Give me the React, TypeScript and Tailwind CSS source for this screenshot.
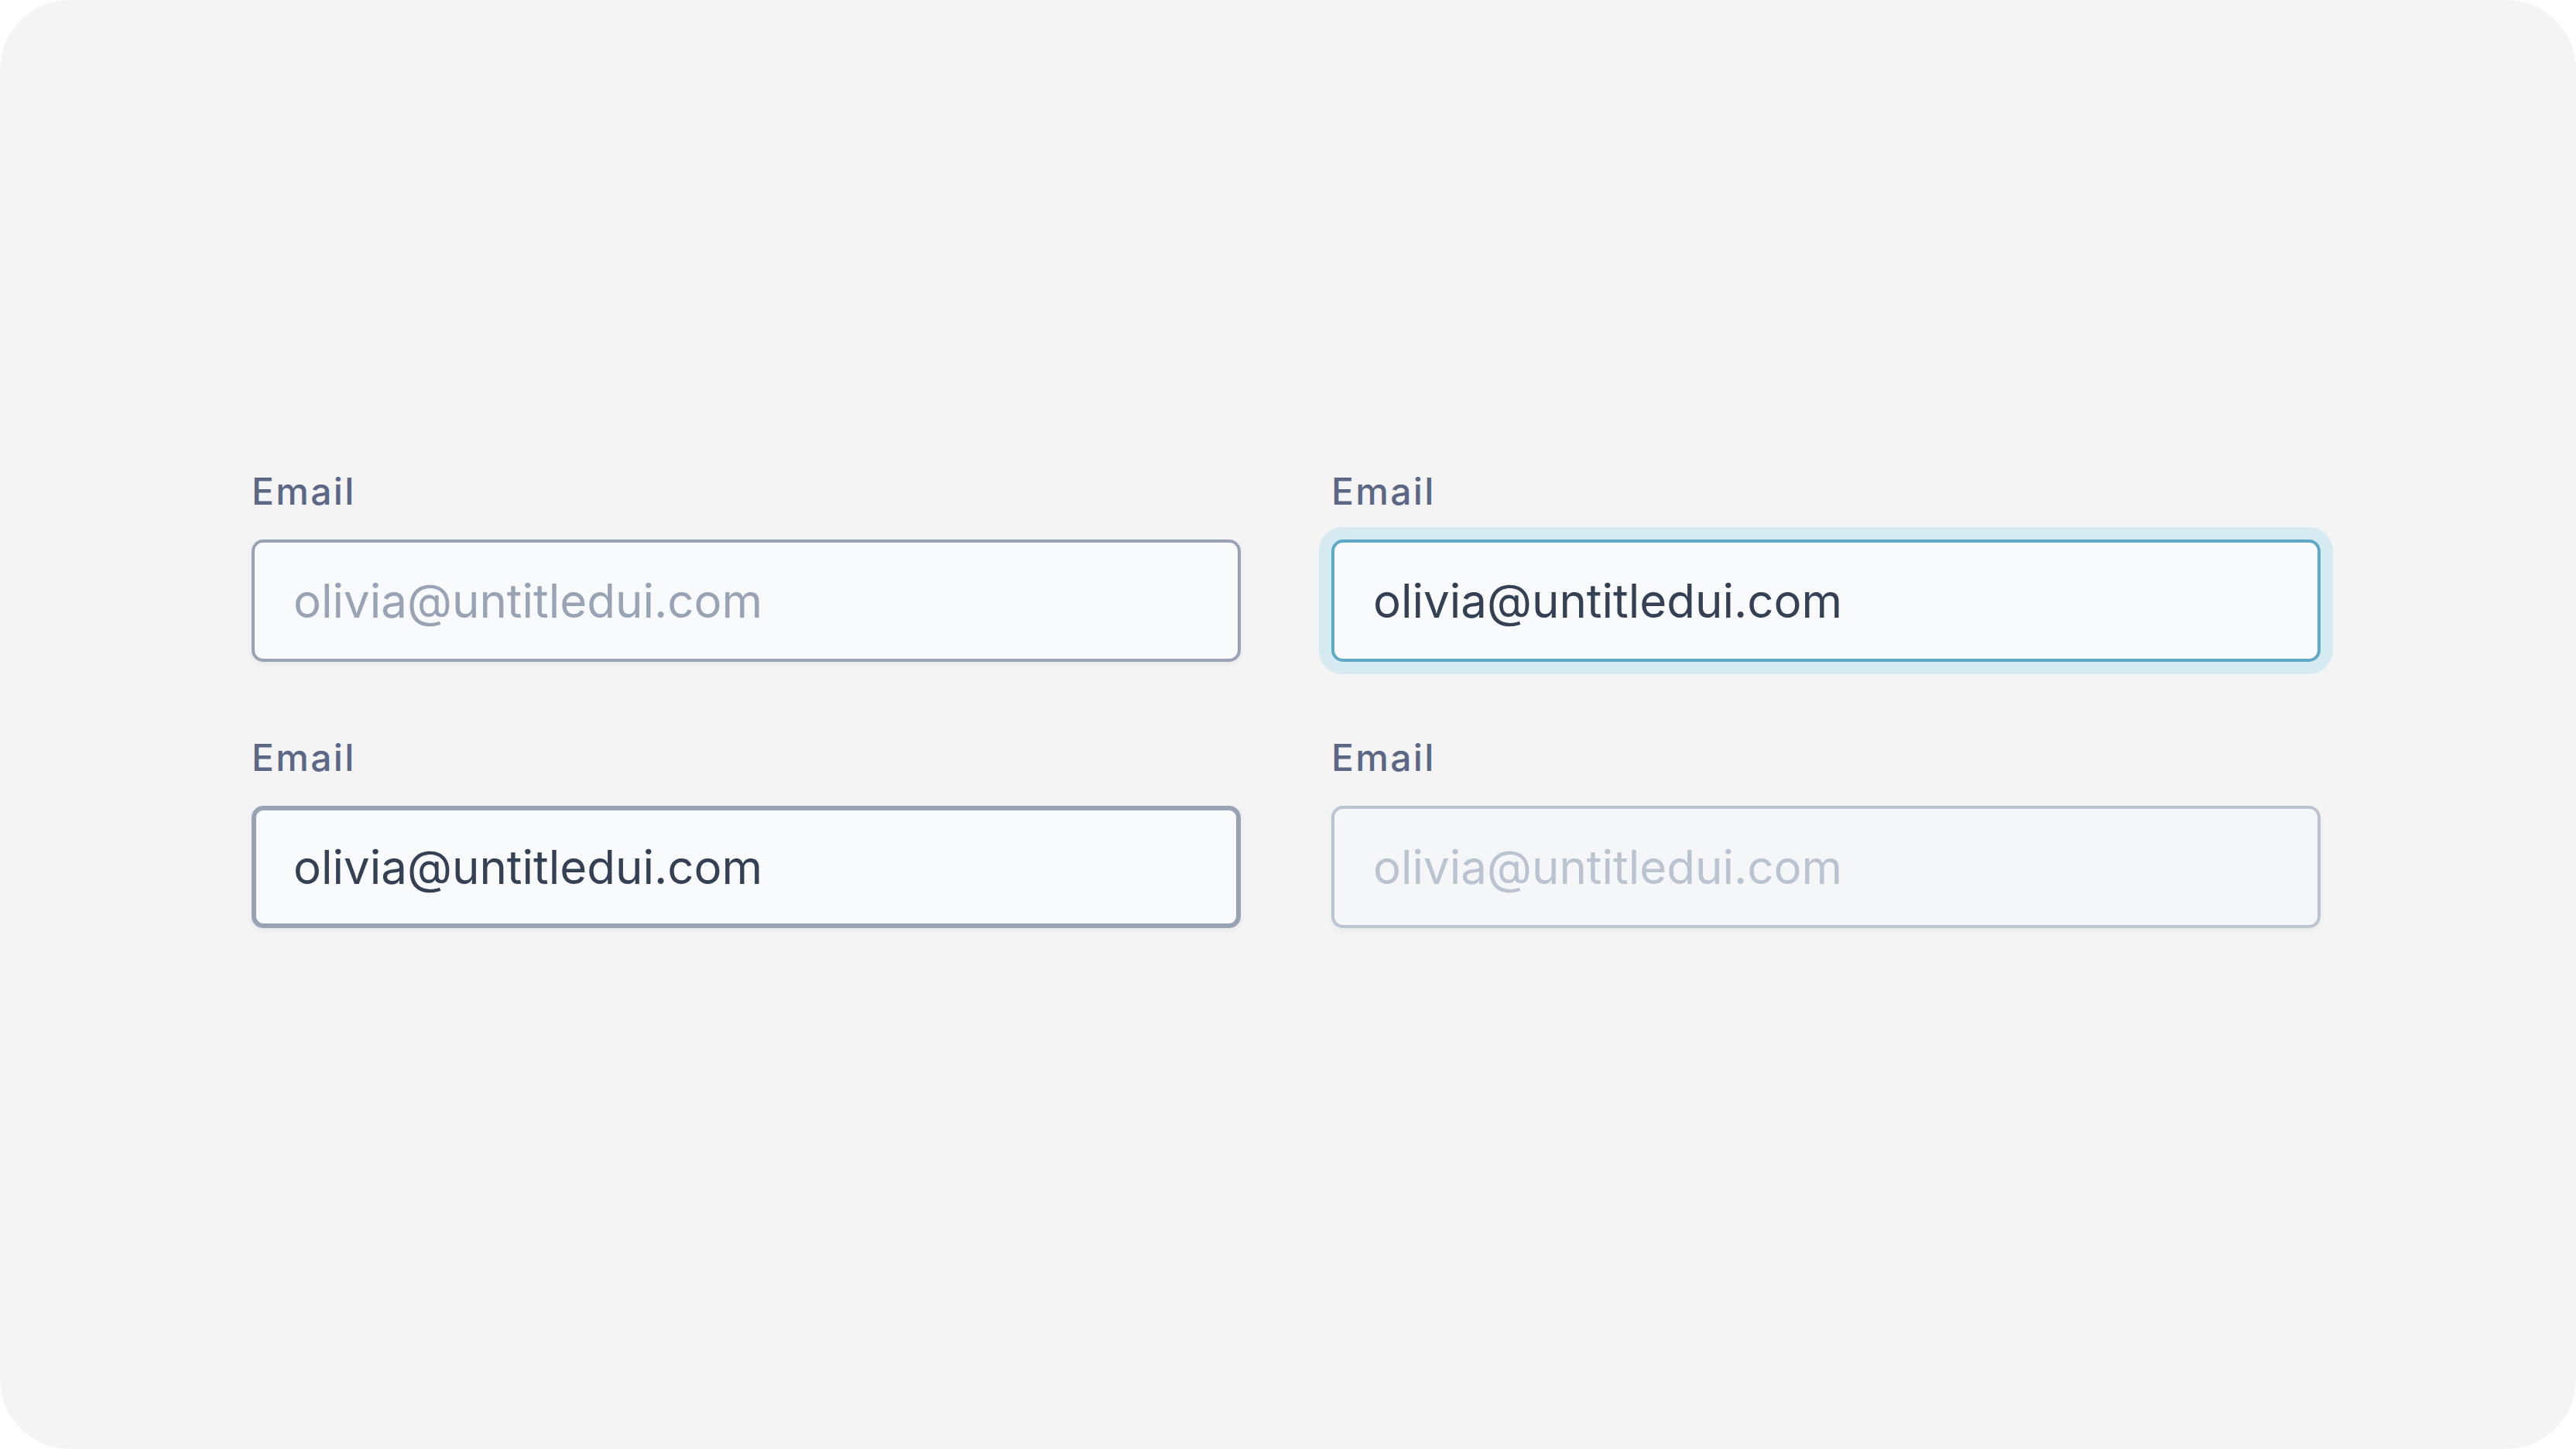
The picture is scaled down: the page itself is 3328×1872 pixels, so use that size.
import type { InputHTMLAttributes } from 'react'

type FieldState = 'placeholder' | 'focused' | 'hover' | 'disabled'

interface FieldProps {
  state: FieldState
}

const EMAIL = 'olivia@untitledui.com'

function EmailField({ state }: FieldProps) {
  const base = 'w-full h-[158px] rounded-[15px] text-[60px] leading-none outline-none'

  const variants: Record<FieldState, string> = {
    placeholder:
      'border-[4px] border-[#98a4b6] bg-[#f9fafc] pl-[50px] placeholder:text-[#98a3b5] shadow-[0_3px_6px_rgba(16,24,40,0.06)]',
    focused:
      'border-[4px] border-[#5fa9c6] bg-[#f9fafc] pl-[50px] text-[#344054] shadow-[0_0_0_16px_#d6eaf1,0_3px_6px_rgba(16,24,40,0.06)]',
    hover:
      'border-[6px] border-[#98a4b6] bg-[#f9fafc] pl-[48px] text-[#344054] shadow-[0_3px_6px_rgba(16,24,40,0.06)]',
    disabled:
      'border-[4px] border-[#bac4d1] bg-[#f5f6f8] pl-[50px] placeholder:text-[#bac4d1] shadow-[0_3px_6px_rgba(16,24,40,0.05)]',
  }

  const inputProps: InputHTMLAttributes<HTMLInputElement> =
    state === 'placeholder' || state === 'disabled'
      ? { placeholder: EMAIL, disabled: state === 'disabled' }
      : { defaultValue: EMAIL, readOnly: true }

  return (
    <label className="flex flex-col">
      <span className="text-[48px] leading-[60px] tracking-[2.3px] text-[#5b6785] font-medium">Email</span>
      <input type="email" className={`${base} ${variants[state]} mt-[32px]`} {...inputProps} />
    </label>
  )
}

export default function App() {
  return (
    <div className="w-[3328px] h-[1872px] bg-white font-[Inter,sans-serif]">
      <div className="w-full h-full rounded-[90px] bg-[#f4f4f4] pl-[325px] pr-[330px] pt-[605px]">
        <div className="grid grid-cols-2 gap-x-[117px] gap-y-[94px]">
          <EmailField state="placeholder" />
          <EmailField state="focused" />
          <EmailField state="hover" />
          <EmailField state="disabled" />
        </div>
      </div>
    </div>
  )
}
